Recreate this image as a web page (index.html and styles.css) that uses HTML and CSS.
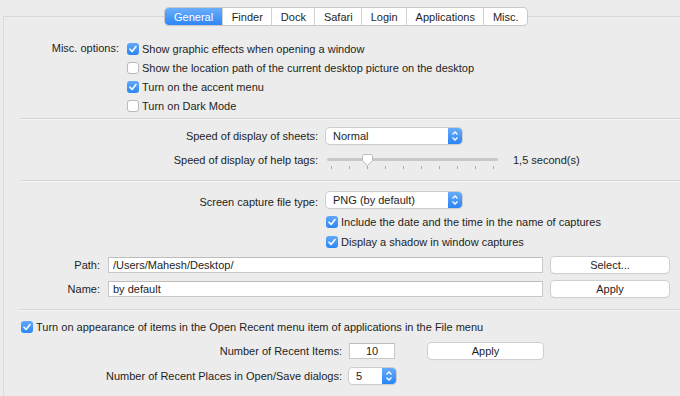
FILE: index.html
```html
<!DOCTYPE html>
<html lang="en">
<head>
    <meta charset="UTF-8">
    <title>General</title>
    <link rel="stylesheet" href="styles.css">
</head>
<body>
    <nav class="tabs">
        <span class="tab active">General</span>
        <span class="tab">Finder</span>
        <span class="tab">Dock</span>
        <span class="tab">Safari</span>
        <span class="tab">Login</span>
        <span class="tab">Applications</span>
        <span class="tab">Misc.</span>
    </nav>

    <div class="pane">
        <section class="misc">
            <span class="label">Misc. options:</span>
            <div class="checks">
                <label class="check"><span class="box on"><svg viewBox="0 0 12 12"><path d="M3 6.2l2.1 2.2L9 3.6"/></svg></span>Show graphic effects when opening a window</label>
                <label class="check"><span class="box"></span>Show the location path of the current desktop picture on the desktop</label>
                <label class="check"><span class="box on"><svg viewBox="0 0 12 12"><path d="M3 6.2l2.1 2.2L9 3.6"/></svg></span>Turn on the accent menu</label>
                <label class="check"><span class="box"></span>Turn on Dark Mode</label>
            </div>
        </section>

        <hr class="sep">

        <section class="form speed">
            <span class="label">Speed of display of sheets:</span>
            <div class="select wide">
                <span>Normal</span>
                <span class="stepper"><svg viewBox="0 0 14 16"><path d="M4.5 6.5L7 4l2.5 2.5M4.5 9.5L7 12l2.5-2.5"/></svg></span>
            </div>
            <span class="label">Speed of display of help tags:</span>
            <div class="slider-row">
                <div class="slider">
                    <div class="track"></div>
                    <div class="ticks">
                        <i></i><i></i><i></i><i></i><i></i><i></i><i></i><i></i><i></i><i></i>
                    </div>
                    <svg class="knob" viewBox="0 0 13 14"><path d="M1.5 2.5a1 1 0 0 1 1-1h8a1 1 0 0 1 1 1v5.2L6.5 12.5 1.5 7.7z"/></svg>
                </div>
                <span class="value">1,5 second(s)</span>
            </div>
        </section>

        <hr class="sep">

        <section class="form capture">
            <span class="label">Screen capture file type:</span>
            <div class="select wide">
                <span>PNG (by default)</span>
                <span class="stepper"><svg viewBox="0 0 14 16"><path d="M4.5 6.5L7 4l2.5 2.5M4.5 9.5L7 12l2.5-2.5"/></svg></span>
            </div>
            <label class="check tall"><span class="box on"><svg viewBox="0 0 12 12"><path d="M3 6.2l2.1 2.2L9 3.6"/></svg></span>Include the date and the time in the name of captures</label>
            <label class="check tall"><span class="box on"><svg viewBox="0 0 12 12"><path d="M3 6.2l2.1 2.2L9 3.6"/></svg></span>Display a shadow in window captures</label>
        </section>

        <section class="files">
            <span class="label">Path:</span>
            <input class="field" type="text" value="/Users/Mahesh/Desktop/">
            <button class="btn">Select...</button>
            <span class="label">Name:</span>
            <input class="field" type="text" value="by default">
            <button class="btn">Apply</button>
        </section>

        <hr class="sep">

        <section class="recent">
            <label class="check"><span class="box on"><svg viewBox="0 0 12 12"><path d="M3 6.2l2.1 2.2L9 3.6"/></svg></span>Turn on appearance of items in the Open Recent menu item of applications in the File menu</label>
            <div class="recent-row items">
                <span class="label">Number of Recent Items:</span>
                <input class="field num" type="text" value="10">
                <button class="btn apply">Apply</button>
            </div>
            <div class="recent-row places">
                <span class="label">Number of Recent Places in Open/Save dialogs:</span>
                <div class="select small">
                    <span>5</span>
                    <span class="stepper"><svg viewBox="0 0 14 16"><path d="M4.5 6.5L7 4l2.5 2.5M4.5 9.5L7 12l2.5-2.5"/></svg></span>
                </div>
            </div>
        </section>
    </div>
</body>
</html>
```

FILE: styles.css
```css
body{
    margin: 0;
    padding: 8px 0 0 0;
    height: 388px;
    background-color: #ececec;
    font-family: "Liberation Sans", Arial, Helvetica, sans-serif;
    font-size: 11px;
    color: #1e1e1e;
    overflow: hidden;
}

.tabs{
    position: relative;
    z-index: 1;
    display: flex;
    margin-left: 165px;
    margin-bottom: -9px;
    width: max-content;
    height: 17px;
    background-color: #fff;
    border-radius: 4px;
    box-shadow: 0 0 0 1px #c9c9c9, 0 1px 1px rgba(0,0,0,0.12);
}
.tab{
    display: flex;
    align-items: center;
    justify-content: center;
    padding: 0 8.5px;
    border-left: 1px solid #d2d2d2;
}
.tab:first-child{
    border-left: none;
}
.tab.active{
    padding: 0 9px;
    color: #fff;
    background: linear-gradient(#6aaefb, #2c87f6);
    border-radius: 4px 0 0 4px;
}

.pane{
    margin-left: 3px;
    height: 379px;
    border-top: 1px solid #d8d8d8;
    border-left: 1px solid #dcdcdc;
}

.label{
    text-align: right;
    white-space: nowrap;
}

.sep{
    height: 0;
    margin: 0 0 0 16px;
    border: none;
    border-top: 1px solid #d4d4d4;
    border-bottom: 1px solid #f7f7f7;
}

/* checkboxes */
.check{
    display: flex;
    align-items: center;
    gap: 3px;
    height: 19px;
    white-space: nowrap;
}
.check.tall{
    grid-column: 2;
    height: 20px;
}
.box{
    width: 12px;
    height: 12px;
    box-sizing: border-box;
    border: 1px solid #b9b9b9;
    border-radius: 3px;
    background-color: #fff;
    flex-shrink: 0;
}
.box.on{
    border: none;
    background: linear-gradient(#62a8fb, #2b86f5);
}
.box svg{
    display: block;
    width: 12px;
    height: 12px;
}
.box path{
    fill: none;
    stroke: #fff;
    stroke-width: 1.6;
    stroke-linecap: round;
    stroke-linejoin: round;
}

/* misc */
.misc{
    display: grid;
    grid-template-columns: 115px auto;
    column-gap: 8px;
    padding-top: 22px;
    margin-bottom: 3px;
}
.misc .label{
    line-height: 19px;
}

/* label + control forms */
.form{
    display: grid;
    grid-template-columns: 314px auto;
    column-gap: 8px;
    align-items: center;
}
.speed{
    padding-top: 8px;
    row-gap: 8px;
    margin-bottom: 12px;
}
.capture{
    padding-top: 10px;
}
.capture .select{
    margin-bottom: 4px;
}

.select{
    display: flex;
    align-items: center;
    justify-content: space-between;
    box-sizing: border-box;
    height: 16px;
    padding-left: 7px;
    background-color: #fff;
    border-radius: 4px;
    box-shadow: 0 0 0 1px #cdcdcd, 0 1px 1px rgba(0,0,0,0.1);
}
.select.wide{
    width: 136px;
}
.select.small{
    width: 47px;
}
.stepper{
    width: 14px;
    height: 16px;
    border-radius: 0 4px 4px 0;
    background: linear-gradient(#66abfb, #2a85f5);
}
.stepper svg{
    display: block;
    width: 14px;
    height: 16px;
}
.stepper path{
    fill: none;
    stroke: #fff;
    stroke-width: 1.3;
}

/* slider */
.slider-row{
    display: flex;
    align-items: center;
    gap: 15px;
    height: 16px;
}
.slider{
    position: relative;
    width: 171px;
    height: 16px;
    margin-left: 1px;
}
.track{
    margin-top: 6px;
    height: 3px;
    border-radius: 2px;
    background-color: #c8c8c8;
}
.ticks{
    display: flex;
    justify-content: space-between;
    margin: 5px 4px 0 4px;
}
.ticks i{
    width: 1px;
    height: 3px;
    background-color: #a9a9a9;
}
.knob{
    position: absolute;
    left: 34px;
    top: 1px;
    width: 13px;
    height: 14px;
}
.knob path{
    fill: #fff;
    stroke: #bcbcbc;
    stroke-width: 1;
}

/* path / name */
.files{
    display: grid;
    grid-template-columns: 96px 435px 118px;
    column-gap: 8px;
    row-gap: 8px;
    align-items: center;
    padding-top: 5px;
    margin-bottom: 12px;
}
.field{
    box-sizing: border-box;
    height: 16px;
    margin: 0;
    padding: 0 4px;
    font-family: inherit;
    font-size: 11px;
    color: #1e1e1e;
    background-color: #fff;
    border: 1px solid #c8c8c8;
    border-top-color: #bcbcbc;
    outline: none;
}
.btn{
    box-sizing: border-box;
    height: 16px;
    margin: 0;
    padding: 0;
    font-family: inherit;
    font-size: 11px;
    color: #1e1e1e;
    background-color: #fff;
    border: none;
    border-radius: 4px;
    box-shadow: 0 0 0 1px #cfcfcf, 0 1px 1px rgba(0,0,0,0.12);
}

/* recent */
.recent{
    padding: 6px 0 0 17px;
}
.recent-row{
    display: flex;
    align-items: center;
    height: 16px;
}
.recent-row .label{
    width: 321px;
    margin-right: 7px;
}
.recent-row.items{
    margin-top: 7px;
}
.recent-row.places{
    margin-top: 9px;
}
.num{
    width: 46px;
    text-align: center;
}
.apply{
    width: 115px;
    margin-left: 33px;
}
```
